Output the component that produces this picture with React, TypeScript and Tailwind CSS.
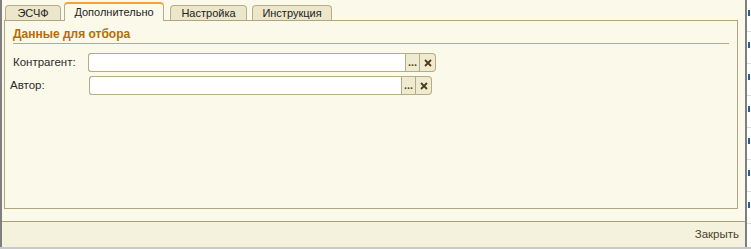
import React from "react";

const font = { fontFamily: '"Liberation Sans", Arial, sans-serif' };

type TabProps = { label: string; active?: boolean; className?: string };

const Tab = ({ label, active = false, className = "" }: TabProps) => (
  <div
    className={`flex items-center justify-center rounded-t-[4px] border border-[#b8ad86] text-[11px] text-[#222] ${
      active
        ? "relative z-[2] h-[19px] border-t-2 border-t-[#f2a43a] border-b-0 bg-[#fbf9ea]"
        : "h-[16px] border-b-0 bg-[#ece7cb]"
    } ${className}`}>
    {label}
  </div>
);

type FieldProps = { label: string; labelClass: string; inputClass: string };

const Field = ({ label, labelClass, inputClass }: FieldProps) => (
  <div className="flex h-[19px] items-center">
    <div className={`text-[11.5px] text-[#2a2a2a] ${labelClass}`}>{label}</div>
    <div className={`flex h-[19px] ${inputClass}`}>
      <div className="flex-1 rounded-l-[3px] border border-r-0 border-[#b6ab85] bg-white" />
      <div className="flex w-[15px] items-end justify-center border border-[#b6ab85] bg-[#efebd2] pb-[3px] text-[11px] font-bold leading-none text-[#5a4313]">
        ...
      </div>
      <div className="flex w-[16px] items-center justify-center rounded-r-[4px] border border-l-0 border-[#b6ab85] bg-[#efebd2]">
        <svg width="8" height="8" viewBox="0 0 8 8">
          <path d="M1 1 L7 7 M7 1 L1 7" stroke="#4f3b12" strokeWidth="1.8" />
        </svg>
      </div>
    </div>
  </div>
);

export default function App() {
  return (
    <div className="flex h-[249px] w-[751px] flex-col bg-[#c9c9c9]" style={font}>
      <div className="flex h-[247px]">
        <div className="flex w-[747px] flex-col border-x-2 border-[#7f7f7f] bg-[#fbf9ea]">
          {/* tabs */}
          <div className="flex h-[21px] items-end pl-[3px]">
            <Tab label="ЭСЧФ" className="w-[56px]" />
            <Tab label="Дополнительно" active className="ml-[3px] w-[100px]" />
            <Tab label="Настройка" className="ml-[6px] w-[77px]" />
            <Tab label="Инструкция" className="ml-[5px] w-[80px]" />
          </div>
          {/* page */}
          <div className="relative z-[1] -mt-px ml-[2px] mr-[7px] h-[189px] border border-[#b0a57c] bg-[#fbf9ea] px-[8px] pt-[7px]">
            <div className="border-b border-[#c4a772] pb-[2px] text-[12px] font-bold leading-[13px] text-[#b56d07]">
              Данные для отбора
            </div>
            <div className="mt-[9px] flex flex-col gap-[4px]">
              <Field label="Контрагент:" labelClass="ml-0 w-[75px]" inputClass="w-[348px]" />
              <Field label="Автор:" labelClass="-ml-[3px] w-[79px]" inputClass="w-[343px]" />
            </div>
          </div>
          <div className="flex-1" />
          {/* footer */}
          <div className="flex h-[26px] items-center justify-end border-t border-[#a99f7a] bg-[#f4f1dd] pr-[6px] text-[11.5px] text-[#4b3f2a]">
            Закрыть
          </div>
        </div>
        <div className="flex w-[4px] flex-col bg-white">
          {[0, 1, 2, 3, 4, 5, 6].map((i) => (
            <div key={i} className="h-[32px] border-b border-[#dcdcdc] pt-[10px]">
              <div className="ml-px h-[6px] w-[2px] bg-[#2a5bb0]" />
            </div>
          ))}
        </div>
      </div>
    </div>
  );
}
